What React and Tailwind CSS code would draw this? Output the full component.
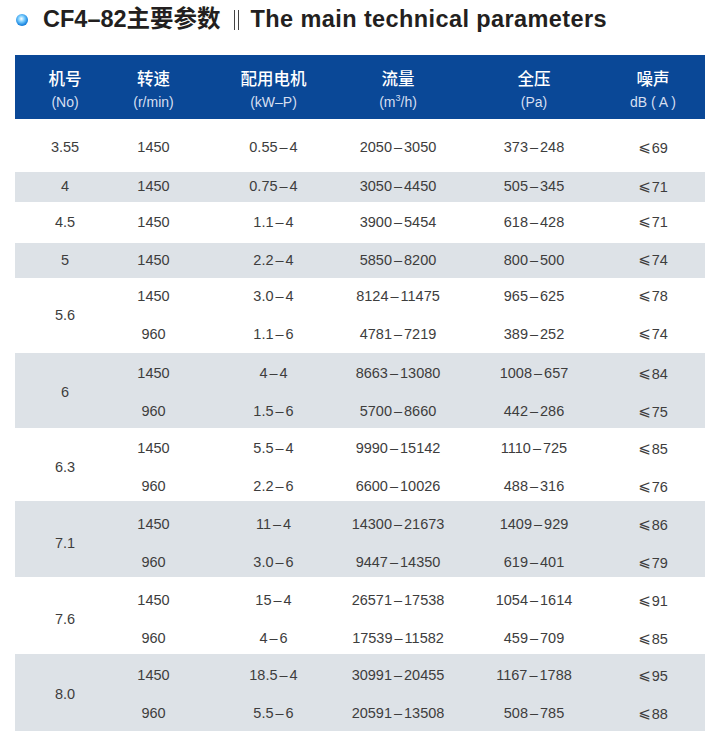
import React from "react";

const cols = "grid grid-cols-[100px_77px_163px_86px_186px_78px]";

const groups = [
  { no: "3.55", h: "h-[53px]", pt: "pt-[5px]", gray: false, rows: [["1450", "0.55-4", "2050-3050", "373-248", "69"]] },
  { no: "4", h: "h-[30px]", pt: "", gray: true, rows: [["1450", "0.75-4", "3050-4450", "505-345", "71"]] },
  { no: "4.5", h: "h-[41px]", pt: "", gray: false, rows: [["1450", "1.1-4", "3900-5454", "618-428", "71"]] },
  { no: "5", h: "h-[35px]", pt: "", gray: true, rows: [["1450", "2.2-4", "5850-8200", "800-500", "74"]] },
  {
    no: "5.6", h: "h-[75px]", pt: "", gray: false,
    rows: [
      ["1450", "3.0-4", "8124-11475", "965-625", "78"],
      ["960", "1.1-6", "4781-7219", "389-252", "74"],
    ],
  },
  {
    no: "6", h: "h-[75px]", pt: "pt-[5px]", gray: true,
    rows: [
      ["1450", "4-4", "8663-13080", "1008-657", "84"],
      ["960", "1.5-6", "5700-8660", "442-286", "75"],
    ],
  },
  {
    no: "6.3", h: "h-[73px]", pt: "pt-[7px]", gray: false,
    rows: [
      ["1450", "5.5-4", "9990-15142", "1110-725", "85"],
      ["960", "2.2-6", "6600-10026", "488-316", "76"],
    ],
  },
  {
    no: "7.1", h: "h-[76px]", pt: "pt-[10px]", gray: true,
    rows: [
      ["1450", "11-4", "14300-21673", "1409-929", "86"],
      ["960", "3.0-6", "9447-14350", "619-401", "79"],
    ],
  },
  {
    no: "7.6", h: "h-[77px]", pt: "pt-[9px]", gray: false,
    rows: [
      ["1450", "15-4", "26571-17538", "1054-1614", "91"],
      ["960", "4-6", "17539-11582", "459-709", "85"],
    ],
  },
  {
    no: "8.0", h: "h-[77px]", pt: "pt-[5px]", gray: true,
    rows: [
      ["1450", "18.5-4", "30991-20455", "1167-1788", "95"],
      ["960", "5.5-6", "20591-13508", "508-785", "88"],
    ],
  },
];

const heads = [
  ["机号", "(No)"],
  ["转速", "(r/min)"],
  ["配用电机", "(kW–P)"],
  ["流量", null],
  ["全压", "(Pa)"],
  ["噪声", "dB ( A )"],
];

// the source uses a slightly wide dash between ranges
const Range = ({ text }) => {
  const parts = text.split("-");
  if (parts.length < 2) return text;
  return (
    <span>
      {parts[0]}
      <span className="mx-[2px]">–</span>
      {parts[1]}
    </span>
  );
};

const Group = ({ group }) => {
  return (
    <div
      className={`${group.h} ${group.pt} ${group.gray ? "bg-[#dde2e7]" : "bg-white"} flex flex-col justify-center`}
    >
      <div className={cols}>
        <div className="flex items-center justify-center" style={{ gridRow: `span ${group.rows.length}` }}>
          {group.no}
        </div>
        {group.rows.map((row, i) =>
          row.map((cell, j) => (
            <div
              key={`${i}-${j}`}
              className={`h-[38px] flex items-center justify-center whitespace-nowrap ${j === 4 ? "pr-[26px]" : ""}`}
              style={{ gridRow: i + 1, gridColumn: j + 2 }}
            >
              {j === 4 ? (
                <span>
                  <span className="font-['DejaVu_Sans',sans-serif] text-[15px] mr-[1px] relative -top-[1px]">⩽</span>
                  {cell}
                </span>
              ) : (
                <Range text={cell} />
              )}
            </div>
          ))
        )}
      </div>
    </div>
  );
};

export default function App() {
  return (
    <div className="w-[720px] h-[742px] bg-white font-['Liberation_Sans','Noto_Sans_CJK_SC',sans-serif] overflow-hidden">
      <div className="h-[55px] pl-[16px] pt-[7px] flex items-start">
        <div className="flex items-center h-[26px]">
          <span className="w-[12px] h-[12px] rounded-full bg-[radial-gradient(circle_at_45%_40%,#ffffff_0%,#7fd0ff_30%,#1b86e0_65%,#0a4fae_100%)] mr-[15px]"></span>
          <h1 className="text-[23.5px] font-bold text-[#231f20] leading-none whitespace-nowrap flex items-center">
            CF4–82主要参数
            <span className="ml-[13px] mr-[12px] flex gap-[3px] h-[20px]">
              <span className="w-[1px] h-full bg-[#444]"></span>
              <span className="w-[1px] h-full bg-[#444]"></span>
            </span>
            <span className="tracking-[0.4px]">The main technical parameters</span>
          </h1>
        </div>
      </div>

      <div className="w-[690px] ml-[15px] text-[14.5px] text-[#3d3d3d]">
        <div className={`${cols} h-[64px] bg-[#0a4897] text-white`}>
          {heads.map(([zh, en], i) => (
            <div key={zh} className={`flex flex-col items-center pt-[13px] whitespace-nowrap ${i === 5 ? "pr-[26px]" : ""}`}>
              <span className="text-[16.5px] leading-[20px] font-['Noto_Sans_CJK_SC',sans-serif] font-medium">
                {zh}
              </span>
              <span className="text-[14px] leading-[16px] mt-[6px] text-[#d6dff0]">
                {en ? (
                  en
                ) : (
                  <>
                    (m<span className="text-[9px] relative -top-[6px]">3</span>/h)
                  </>
                )}
              </span>
            </div>
          ))}
        </div>

        {groups.map((group) => (
          <Group key={group.no} group={group} />
        ))}
      </div>
    </div>
  );
}
